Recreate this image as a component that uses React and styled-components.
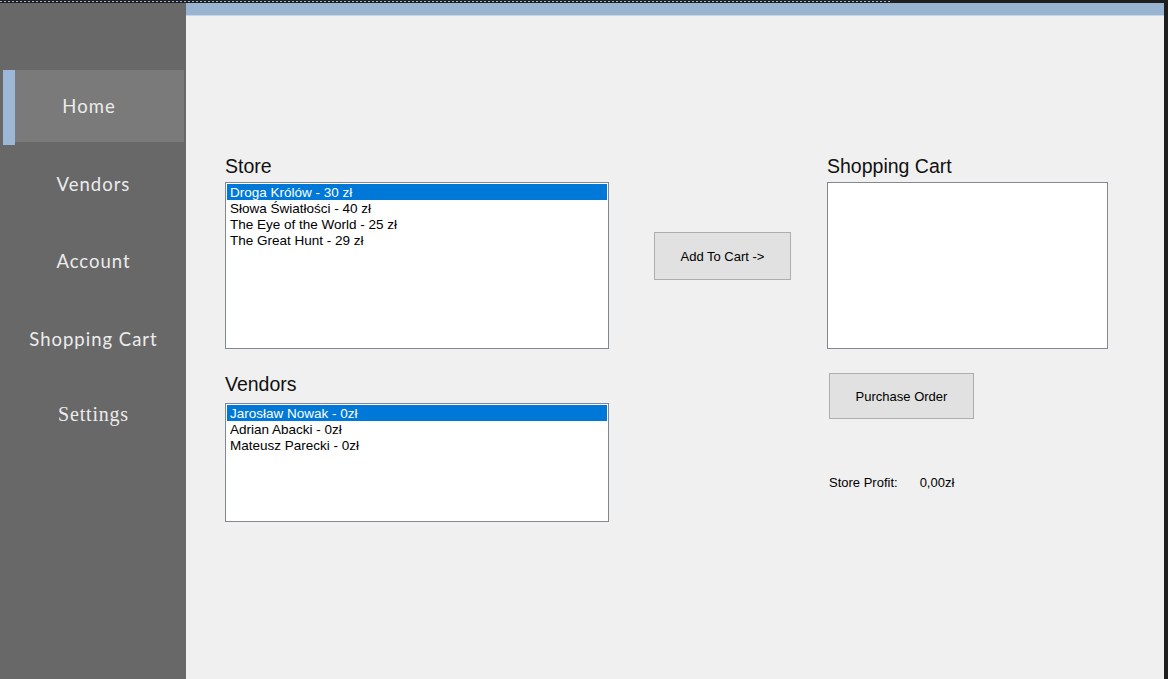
import styled, { createGlobalStyle } from "styled-components";

const GlobalStyle = createGlobalStyle`
  html, body {
    margin: 0;
    padding: 0;
    background: #1e1e1e;
    overflow: hidden;
  }
  * {
    box-sizing: border-box;
  }
`;

const storeItems = [
  "Droga Królów - 30 zł",
  "Słowa Światłości - 40 zł",
  "The Eye of the World - 25 zł",
  "The Great Hunt - 29 zł",
];

const vendorItems = [
  "Jarosław Nowak - 0zł",
  "Adrian Abacki - 0zł",
  "Mateusz Parecki - 0zł",
];

const navItems = [
  { label: "Home", active: true },
  { label: "Vendors" },
  { label: "Account" },
  { label: "Shopping Cart" },
  { label: "Settings", serif: true },
];

const App = () => {
  return (
    <>
      <GlobalStyle />
      <Window>
        <TopStrip>
          <DottedLine />
        </TopStrip>
        <Body>
          <Sidebar>
            {navItems.map((item) => (
              <NavItem key={item.label} $active={item.active}>
                {item.active && <Indicator />}
                {item.serif ? (
                  <SerifText>{item.label}</SerifText>
                ) : (
                  <NavText>{item.label}</NavText>
                )}
              </NavItem>
            ))}
          </Sidebar>

          <Main>
            <CaptionBar />
            <Content>
              <Column>
                <SectionLabel $mb={4}>Store</SectionLabel>
                <ListBox $height={167}>
                  {storeItems.map((item, i) => (
                    <ListItem key={item} $selected={i === 0}>
                      {item}
                    </ListItem>
                  ))}
                </ListBox>
                <SectionLabel $mt={23} $mb={7}>
                  Vendors
                </SectionLabel>
                <ListBox $height={119}>
                  {vendorItems.map((item, i) => (
                    <ListItem key={item} $selected={i === 0}>
                      {item}
                    </ListItem>
                  ))}
                </ListBox>
              </Column>

              <Column>
                <Button $width={137} $height={48} $ml={45} $mt={78}>
                  Add To Cart -&gt;
                </Button>
              </Column>

              <Column>
                <SectionLabel $mb={4}>Shopping Cart</SectionLabel>
                <ListBox $height={167} />
                <Button $width={145} $height={46} $ml={2} $mt={24}>
                  Purchase Order
                </Button>
                <ProfitRow>
                  <span>Store Profit:</span>
                  <span>0,00zł</span>
                </ProfitRow>
              </Column>
            </Content>
          </Main>

          <RightEdge />
        </Body>
      </Window>
    </>
  );
};

export default App;

const Window = styled.div`
  width: 1168px;
  height: 679px;
  display: flex;
  flex-direction: column;
`;

const TopStrip = styled.div`
  height: 3px;
  background: #1f1f1f;
  display: flex;
  align-items: flex-end;
`;

const DottedLine = styled.div`
  width: 890px;
  height: 1px;
  margin-bottom: 1px;
  background: repeating-linear-gradient(
    to right,
    #9cb6d6 0 2px,
    transparent 2px 4px
  );
`;

const Body = styled.div`
  flex: 1;
  display: flex;
  min-height: 0;
`;

const Sidebar = styled.nav`
  width: 186px;
  flex-shrink: 0;
  background: #686868;
  padding: 67px 2px 0 3px;
  display: flex;
  flex-direction: column;
  gap: 5.5px;
`;

const NavItem = styled.div`
  position: relative;
  height: 72px;
  display: flex;
  align-items: center;
  justify-content: center;
  padding-right: ${(p) => (p.$active ? "9px" : "0")};
  background: ${(p) => (p.$active ? "#7a7a7a" : "transparent")};
  color: #ececec;
`;

const NavText = styled.span`
  font-family: Lato, "Open Sans", sans-serif;
  font-size: 18.5px;
  letter-spacing: 1px;
`;

const SerifText = styled.span`
  font-family: "Liberation Serif", "DejaVu Serif", "Times New Roman", serif;
  font-size: 20px;
  letter-spacing: 0.8px;
  margin-top: -3px;
`;

const Indicator = styled.span`
  position: absolute;
  left: 0;
  top: 0;
  width: 12px;
  height: 75px;
  background: #9db8d7;
`;

const Main = styled.main`
  flex: 1;
  background: #f0f0f0;
  display: flex;
  flex-direction: column;
`;

const CaptionBar = styled.div`
  height: 13px;
  background: #99b4d1;
  border-bottom: 1px solid #c6d5e7;
`;

const Content = styled.div`
  display: grid;
  grid-template-columns: 384px 218px 281px;
  padding: 138px 0 0 39px;
  font-family: "Liberation Sans", Arial, sans-serif;
`;

const Column = styled.div`
  display: flex;
  flex-direction: column;
  align-items: flex-start;
`;

const SectionLabel = styled.div`
  height: 24px;
  line-height: 24px;
  font-size: 19.5px;
  color: #111;
  margin-top: ${(p) => p.$mt || 0}px;
  margin-bottom: ${(p) => p.$mb || 0}px;
`;

const ListBox = styled.div`
  width: 100%;
  height: ${(p) => p.$height}px;
  background: #fff;
  border: 1px solid #828790;
  padding: 1px;
`;

const ListItem = styled.div`
  height: 16px;
  line-height: 18px;
  padding-left: 3px;
  font-size: 13.5px;
  white-space: nowrap;
  background: ${(p) => (p.$selected ? "#0078d7" : "transparent")};
  color: ${(p) => (p.$selected ? "#fff" : "#000")};
`;

const Button = styled.button`
  width: ${(p) => p.$width}px;
  height: ${(p) => p.$height}px;
  margin-left: ${(p) => p.$ml || 0}px;
  margin-top: ${(p) => p.$mt || 0}px;
  background: #e1e1e1;
  border: 1px solid #adadad;
  border-radius: 0;
  font-family: "Liberation Sans", Arial, sans-serif;
  font-size: 13px;
  color: #000;
  padding: 0;
`;

const ProfitRow = styled.div`
  margin: 56px 0 0 2px;
  display: flex;
  gap: 22px;
  font-size: 13px;
  line-height: 15px;
  color: #000;
`;

const RightEdge = styled.div`
  width: 4px;
  flex-shrink: 0;
  background: #1e1e1e;
`;
